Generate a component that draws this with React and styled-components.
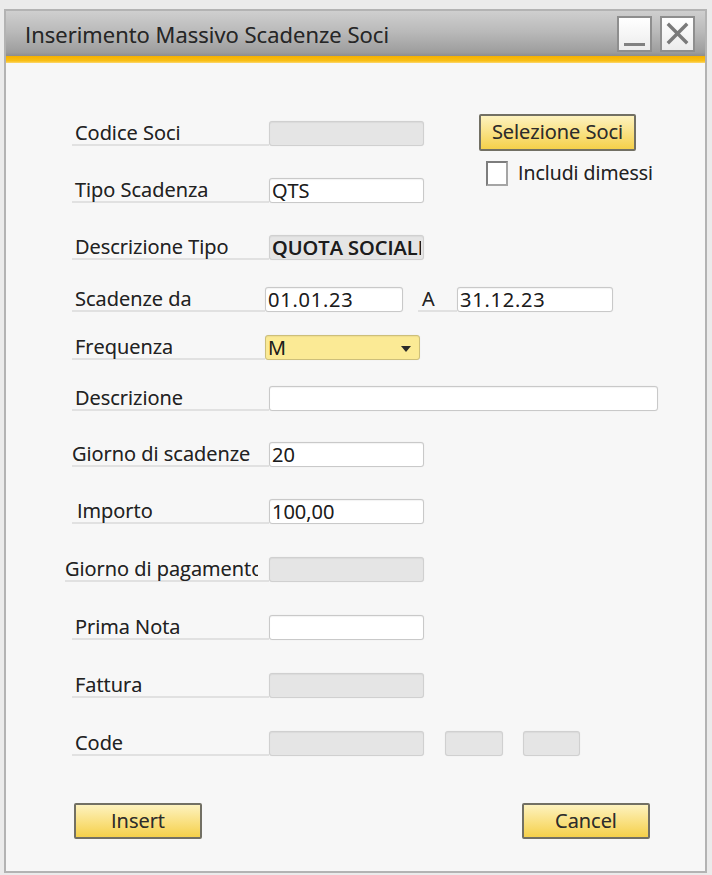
import React from "react";
import styled, { createGlobalStyle } from "styled-components";

const Global = createGlobalStyle`
  html, body { margin: 0; padding: 0; background: #ebebeb; }
  body { font-family: "Open Sans", "Liberation Sans", sans-serif; color: #1f1f1f; }
  * { box-sizing: border-box; }
`;

const Window = styled.div`
  margin: 9px 5px 0 4px;
  width: 703px;
  height: 864px;
  border: 2px solid #b3b3b3;
  display: flex;
  flex-direction: column;
  background: #f7f7f7;
`;

const TitleBar = styled.div`
  height: 45px;
  display: flex;
  align-items: center;
  justify-content: space-between;
  padding: 0 10px 0 19px;
  background: linear-gradient(#cfcfcf 0%, #bababa 45%, #9d9d9d 92%, #8d8d8d 100%);
`;

const Title = styled.div`
  font-size: 22px;
  color: #262626;
  letter-spacing: 0.05px;
  padding-top: 1px;
  text-shadow: 0 0 0.5px rgba(0, 0, 0, 0.4);
`;

const WinButtons = styled.div`
  display: flex;
  gap: 8px;
`;

const WinButton = styled.div`
  width: 35px;
  height: 36px;
  border: 2px solid #8e8e8e;
  background: linear-gradient(#ffffff, #ececec);
  display: flex;
  align-items: center;
  justify-content: center;
`;

const Accent = styled.div`
  height: 7px;
  background: linear-gradient(#f4b000, #f9bf16 70%, #fcd76e);
`;

const Body = styled.div`
  flex: 1;
  padding: 51px 0 0 66px;
  display: flex;
  flex-direction: column;
`;

const TopSection = styled.div`
  display: flex;
  align-items: flex-start;
`;

const LeftStack = styled.div`
  padding-top: 7px;
  display: flex;
  flex-direction: column;
`;

const SidePanel = styled.div`
  margin-left: 55px;
  display: flex;
  flex-direction: column;
`;

const Row = styled.div`
  display: flex;
  align-items: stretch;
  margin-top: ${(p) => p.$mt || 0}px;
`;

const Label = styled.div`
  width: ${(p) => p.$w || 197}px;
  margin-left: ${(p) => p.$ml || 0}px;
  padding-left: ${(p) => (p.$pl === undefined ? 3 : p.$pl)}px;
  padding-right: ${(p) => p.$pr || 0}px;
  height: 25px;
  border-bottom: 2px solid #e1e1e1;
  display: flex;
  font-size: 20px;
  line-height: 23px;
  color: #222;
  white-space: nowrap;
  flex-shrink: 0;
  text-shadow: 0 0 0.5px rgba(0, 0, 0, 0.4);
`;

const LabelText = styled.span`
  min-width: 0;
  clip-path: ${(p) => (p.$clip ? "inset(-8px 0 -8px 0)" : "none")};
`;

const tones = {
  white: { bg: "#ffffff", border: "#c9c9c9" },
  gray: { bg: "#e5e5e5", border: "#d0d0d0" },
  yellow: { bg: "#fbea95", border: "#cdbf7a" },
};

const Field = styled.div`
  width: ${(p) => p.$w || 155}px;
  height: 25px;
  margin-left: ${(p) => p.$ml || 0}px;
  border: 1px solid ${(p) => tones[p.$tone || "white"].border};
  background: ${(p) => tones[p.$tone || "white"].bg};
  border-radius: 3px;
  box-shadow: inset 0 1px 1px rgba(0, 0, 0, 0.05), 0 0 1px rgba(0, 0, 0, 0.12);
  padding: 0 2px;
  font-size: 20px;
  line-height: 23px;
  color: #1c1c1c;
  white-space: nowrap;
  display: flex;
  align-items: flex-start;
  justify-content: space-between;
  flex-shrink: 0;
  text-shadow: 0 0 0.5px rgba(0, 0, 0, 0.4);
`;

const FieldText = styled.span`
  min-width: 0;
  flex: 0 1 auto;
  clip-path: inset(-8px 0 -8px 0);
  letter-spacing: ${(p) => p.$ls || 0}px;
  font-weight: ${(p) => p.$weight || 400};
`;

const Arrow = styled.span`
  width: 0;
  height: 0;
  flex-shrink: 0;
  border-left: 5px solid transparent;
  border-right: 5px solid transparent;
  border-top: 6px solid #2a2a2a;
  margin: 10px 6px 0 0;
`;

const YellowButton = styled.div`
  width: ${(p) => p.$w}px;
  height: ${(p) => p.$h}px;
  border: 2px solid #727064;
  border-radius: 2px;
  background: linear-gradient(#fdf2bf 0%, #fae38a 45%, #f5d04a 100%);
  font-size: 20px;
  color: #2c2c2c;
  display: flex;
  align-items: center;
  justify-content: center;
  padding-bottom: 2px;
  text-shadow: 0 0 0.5px rgba(0, 0, 0, 0.4);
`;

const CheckRow = styled.div`
  margin-top: 10px;
  padding-left: 7px;
  display: flex;
  align-items: flex-start;
  gap: 10px;
`;

const CheckBox = styled.div`
  width: 22px;
  height: 25px;
  border: 2px solid #7d7d7d;
  border-right-color: #a5a5a5;
  border-bottom-color: #a5a5a5;
  background: #fff;
`;

const CheckLabel = styled.span`
  font-size: 19.5px;
  line-height: 23px;
  color: #222;
  text-shadow: 0 0 0.5px rgba(0, 0, 0, 0.4);
`;

const ButtonBar = styled.div`
  margin-top: 47px;
  width: 578px;
  padding-left: 2px;
  display: flex;
  justify-content: space-between;
`;

function MinIcon() {
  return (
    <svg width="31" height="32" viewBox="0 0 31 32">
      <rect x="5" y="25" width="21" height="3" fill="#808080" />
    </svg>
  );
}

function CloseIcon() {
  return (
    <svg width="31" height="32" viewBox="0 0 31 32">
      <path d="M7 7 L24 24 M24 7 L7 24" stroke="#7a7a7a" strokeWidth="3.4" strokeLinecap="square" />
    </svg>
  );
}

export default function App() {
  return (
    <>
      <Global />
      <Window>
        <TitleBar>
          <Title>Inserimento Massivo Scadenze Soci</Title>
          <WinButtons>
            <WinButton><MinIcon /></WinButton>
            <WinButton><CloseIcon /></WinButton>
          </WinButtons>
        </TitleBar>
        <Accent />
        <Body>
          <TopSection>
            <LeftStack>
              <Row>
                <Label><LabelText>Codice Soci</LabelText></Label>
                <Field $tone="gray" />
              </Row>
              <Row $mt={32}>
                <Label><LabelText>Tipo Scadenza</LabelText></Label>
                <Field><FieldText>QTS</FieldText></Field>
              </Row>
              <Row $mt={32}>
                <Label><LabelText>Descrizione Tipo</LabelText></Label>
                <Field $tone="gray"><FieldText $weight={600}>QUOTA SOCIALE</FieldText></Field>
              </Row>
            </LeftStack>
            <SidePanel>
              <YellowButton $w={157} $h={37}>Selezione Soci</YellowButton>
              <CheckRow>
                <CheckBox />
                <CheckLabel>Includi dimessi</CheckLabel>
              </CheckRow>
            </SidePanel>
          </TopSection>

          <Row $mt={27}>
            <Label $w={193}><LabelText>Scadenze da</LabelText></Label>
            <Field $w={138}><FieldText $ls={0.8}>01.01.23</FieldText></Field>
            <Label $w={39} $ml={15} $pl={4}><LabelText>A</LabelText></Label>
            <Field $w={156}><FieldText $ls={0.8}>31.12.23</FieldText></Field>
          </Row>
          <Row $mt={23}>
            <Label $w={193}><LabelText>Frequenza</LabelText></Label>
            <Field $tone="yellow"><FieldText>M</FieldText><Arrow /></Field>
          </Row>
          <Row $mt={26}>
            <Label><LabelText>Descrizione</LabelText></Label>
            <Field $w={389} />
          </Row>
          <Row $mt={31}>
            <Label $pl={0}><LabelText>Giorno di scadenze</LabelText></Label>
            <Field><FieldText>20</FieldText></Field>
          </Row>
          <Row $mt={32}>
            <Label $pl={5}><LabelText>Importo</LabelText></Label>
            <Field><FieldText>100,00</FieldText></Field>
          </Row>
          <Row $mt={33}>
            <Label $w={204} $ml={-7} $pl={0} $pr={11}><LabelText $clip>Giorno di pagamento</LabelText></Label>
            <Field $tone="gray" />
          </Row>
          <Row $mt={33}>
            <Label><LabelText>Prima Nota</LabelText></Label>
            <Field />
          </Row>
          <Row $mt={33}>
            <Label><LabelText>Fattura</LabelText></Label>
            <Field $tone="gray" />
          </Row>
          <Row $mt={33}>
            <Label><LabelText>Code</LabelText></Label>
            <Field $tone="gray" />
            <Field $tone="gray" $w={58} $ml={21} />
            <Field $tone="gray" $w={57} $ml={20} />
          </Row>

          <ButtonBar>
            <YellowButton $w={128} $h={36}>Insert</YellowButton>
            <YellowButton $w={128} $h={36}>Cancel</YellowButton>
          </ButtonBar>
        </Body>
      </Window>
    </>
  );
}
